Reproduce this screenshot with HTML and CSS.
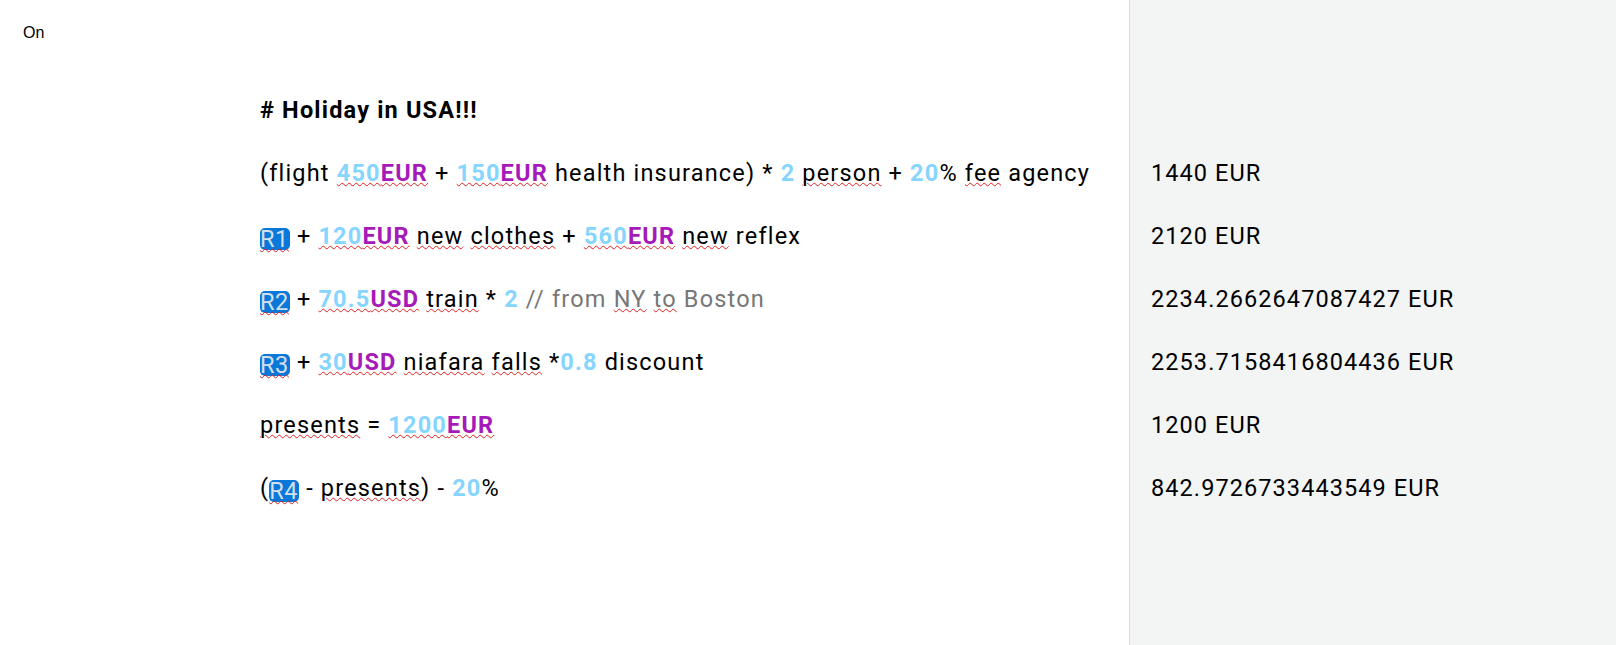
FILE: index.html
```html
<!DOCTYPE html>
<html>
<head>
<meta charset="utf-8">
<link rel="stylesheet" href="styles.css">
</head>
<body>
<div class="app">
  <div class="editor">
    <div class="toggle">On</div>
    <div class="lines">
      <div class="line heading"># Holiday in USA!!!</div>
      <div class="line">(flight <span class="sp"><span class="num">450</span><span class="unit">EUR</span></span> + <span class="sp"><span class="num">150</span><span class="unit">EUR</span></span> health insurance) * <span class="num">2</span> <span class="sp">person</span> + <span class="num">20</span>% <span class="sp">fee</span> agency</div>
      <div class="line"><span class="ref sp">R1</span> + <span class="sp"><span class="num">120</span><span class="unit">EUR</span></span> <span class="sp">new</span> <span class="sp">clothes</span> + <span class="sp"><span class="num">560</span><span class="unit">EUR</span></span> <span class="sp">new</span> reflex</div>
      <div class="line"><span class="ref sp">R2</span> + <span class="sp"><span class="num">70.5</span><span class="unit">USD</span></span> <span class="sp">train</span> * <span class="num">2</span> <span class="comment">// from <span class="sp">NY</span> <span class="sp">to</span> Boston</span></div>
      <div class="line"><span class="ref sp">R3</span> + <span class="sp"><span class="num">30</span><span class="unit">USD</span></span> <span class="sp">niafara</span> <span class="sp">falls</span> *<span class="num">0.8</span> discount</div>
      <div class="line"><span class="sp">presents</span> = <span class="sp"><span class="num">1200</span><span class="unit">EUR</span></span></div>
      <div class="line">(<span class="ref sp">R4</span> - <span class="sp">presents</span>) - <span class="num">20</span>%</div>
    </div>
  </div>
  <div class="results">
    <div class="line empty"></div>
    <div class="line">1440 EUR</div>
    <div class="line">2120 EUR</div>
    <div class="line">2234.2662647087427 EUR</div>
    <div class="line">2253.7158416804436 EUR</div>
    <div class="line">1200 EUR</div>
    <div class="line">842.9726733443549 EUR</div>
  </div>
</div>
</body>
</html>
```
FILE: styles.css
```css
html, body {
  margin: 0;
  padding: 0;
  height: 100%;
  background: #ffffff;
}
.app {
  display: flex;
  height: 645px;
  font-family: Roboto, "Liberation Sans", sans-serif;
  color: #000;
}
.editor {
  position: relative;
  border-right: 1px solid #dcdcdc;
  box-sizing: border-box;
  width: 1130px;
}
.toggle {
  position: absolute;
  left: 23px;
  top: 24px;
  font-family: "Liberation Sans", Arial, sans-serif;
  font-size: 16px;
  color: #000;
}
.lines {
  padding: 79px 0 0 260px;
}
.lines .line {
  letter-spacing: 1.18px;
}
.results {
  flex: 1;
  background: #f3f4f4;
  padding: 79px 0 0 21px;
}
.line {
  height: 63px;
  line-height: 63px;
  font-size: 23.5px;
  letter-spacing: 1.08px;
  white-space: nowrap;
}
.heading {
  font-weight: 700;
}
.num {
  color: #86d5ff;
  font-weight: 700;
}
.unit {
  color: #a51ab8;
  font-weight: 700;
}
.sp {
  text-decoration: underline wavy #e02020;
  text-decoration-thickness: 1px;
  text-underline-offset: 1px;
}
.comment {
  color: #777;
}
.lines .line .ref {
  display: inline-block;
  background: #0a78d8;
  color: #d4dfea;
  border-radius: 5px;
  height: 22px;
  line-height: 22px;
  padding: 0 1px 0 0;
  letter-spacing: 0.6px;
  vertical-align: -3px;
}
```
